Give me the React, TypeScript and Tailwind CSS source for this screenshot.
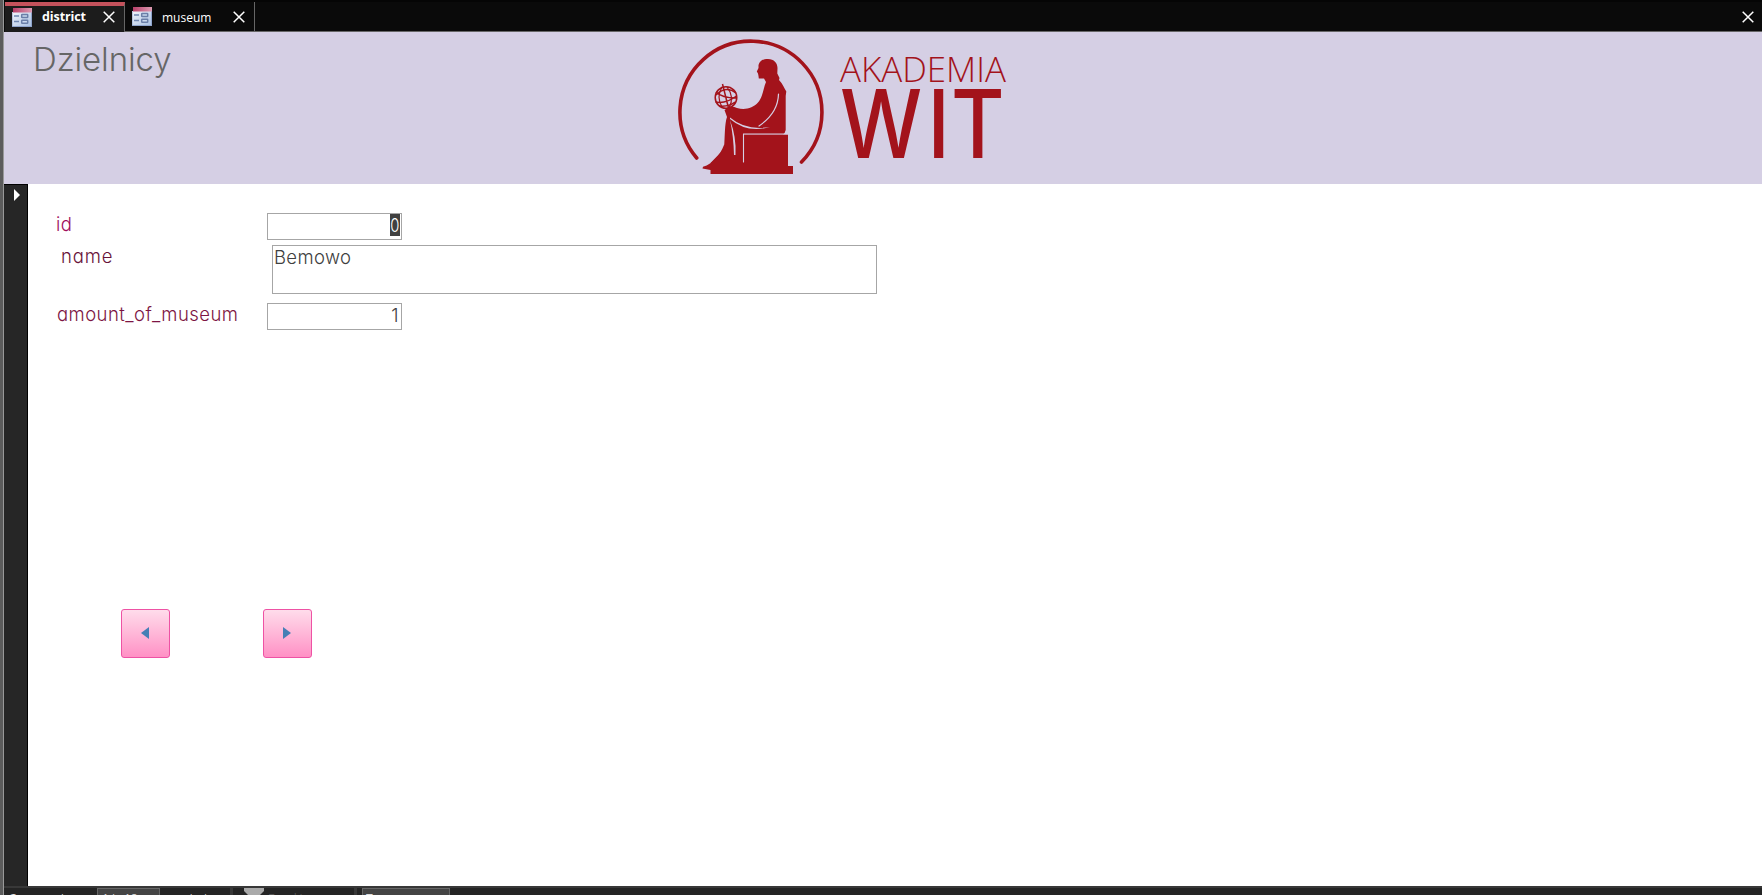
import React from "react";

const GOTHIC =
  "font-['Inter',sans-serif] font-light [font-feature-settings:'cv11'_1]";

function FormIcon() {
  return (
    <svg width="20" height="19" viewBox="0 0 20 19" className="shrink-0">
      <defs>
        <linearGradient id="iconHead" x1="0" y1="0" x2="1" y2="0">
          <stop offset="0" stopColor="#b9406a" />
          <stop offset="1" stopColor="#dc9bb2" />
        </linearGradient>
        <linearGradient id="iconBody" x1="0" y1="0" x2="1" y2="1">
          <stop offset="0" stopColor="#f2f6fc" />
          <stop offset="1" stopColor="#a9c0e2" />
        </linearGradient>
      </defs>
      <rect x="0" y="4" width="20" height="15" fill="#8ea3cb" />
      <rect x="0.5" y="4" width="18.5" height="14" fill="url(#iconBody)" />
      <rect x="1" y="0" width="19" height="4.5" fill="url(#iconHead)" />
      <path d="M2 8h5M2 13.5h5" stroke="#6f86b0" strokeWidth="1.6" />
      <rect x="9.7" y="6.6" width="6" height="3" rx="0.5" fill="#c9d8ee" stroke="#6a7fa8" strokeWidth="1.5" />
      <rect x="9.7" y="12.2" width="6" height="3" rx="0.5" fill="#c9d8ee" stroke="#6a7fa8" strokeWidth="1.5" />
    </svg>
  );
}

function CloseIcon() {
  return (
    <svg width="12" height="12" viewBox="0 0 12 12" className="shrink-0">
      <path d="M0.7 0.7l10.6 10.6M11.3 0.7L0.7 11.3" stroke="#fff" strokeWidth="1.5" />
    </svg>
  );
}

function TabBar() {
  return (
    <div className="flex h-8 border-t-2 border-[#050505] bg-[#0a0a0a] font-['Open_Sans',sans-serif] text-xs text-white">
      <div className="ml-px flex w-[120px] items-center border-t-4 border-r border-t-[#c4525c] border-r-[#666] bg-[#1c1c1c] pl-[7px]">
        <div className="-mt-1 flex items-center">
          <FormIcon />
          <span className="ml-2.5 w-[61px] text-[12.5px] font-bold tracking-[-0.1px]">district</span>
          <CloseIcon />
        </div>
      </div>
      <div className="flex w-[130px] items-center border-r border-b border-[#666] pl-[7px]">
        <FormIcon />
        <span className="ml-2.5 mt-0.5 w-[71px]">museum</span>
        <CloseIcon />
      </div>
      <div className="flex flex-1 items-center justify-end border-b border-[#666] pr-2">
        <CloseIcon />
      </div>
    </div>
  );
}

function Logo() {
  return (
    <svg width="340" height="152" viewBox="670 32 340 152" className="block">
      <g fill="none" stroke="#a3131b">
        <path d="M696.7 158A71 71 0 1 1 801.5 162" strokeWidth="3.6" strokeLinecap="round" />
        <g strokeWidth="1.5">
          <circle cx="726" cy="97.5" r="10.8" />
          <path d="M722.5 84L729.5 112M716 95Q726 85 736 93M715.5 102Q726 104 736.5 96M719 106Q729 107 735 102M716 92Q722 98 736 98" />
          <path d="M722 87Q716 97 722 107M727 87Q735 97 729 108" strokeWidth="1.2" />
        </g>
      </g>
      <g fill="#a3131b">
        <path d="M758.5 65C760 60.5 763 58.9 768 58.9C774 59 777.5 63 777.5 68L777.3 73.5L779.5 78L779 80C783 84 784 88 786.3 91.5L785.7 96V130Q785 133.5 783 134.5H743V163H710.5L724 149C725 136 724.5 124 727 117L724.5 110L729 107Q733 106 737 108C745 110.500 753 108 758 102.5C763 97 763 89 766 82L764 78.5H758.8L758.5 76L758 73.500L756.8 71.5L758.5 68Z" />
        <path d="M743 134.5H788V166H793V174H710.5V170L702.5 168.5L703 166.8C713 164 720 155 724 145Z" />
      </g>
      <g fill="none" stroke="#d5cfe4" strokeLinecap="round">
        <path d="M743.5 162V134H788" strokeWidth="1.1" />
        <path d="M778.5 94Q778 113 759 126" strokeWidth="1.2" />
      </g>
      <g fill="#d5cfe4">
        <path d="M730 117.5Q746 131 770 127Q747 133.5 730 119Z" />
        <path d="M730 120Q736.5 137 735.5 155H734Q733.5 136 730 120Z" />
      </g>
      <g fill="#a3131b">
        <text
          transform="translate(840 81.5) scale(1 1.15)"
          textLength="166"
          lengthAdjust="spacingAndGlyphs"
          className="font-['Open_Sans',sans-serif] text-[31px] font-light"
        >
          AKADEMIA
        </text>
        <text
          transform="translate(0 158) scale(1 1.15)"
          x="840 927.5 951"
          className="font-['Inter',sans-serif] text-[82px] font-medium"
        >
          WIT
        </text>
      </g>
    </svg>
  );
}

function NavButton({ label, d }: { label: string; d: string }) {
  return (
    <button
      aria-label={label}
      className="flex h-[49px] w-[49px] items-center justify-center rounded-[3px] border border-[#ee52a4] bg-linear-to-b from-[#ffdceb] to-[#ff90c5]"
    >
      <svg width="8" height="12" viewBox="0 0 8 12" className="-ml-px -mt-px">
        <path d={d} fill="#467fb5" />
      </svg>
    </button>
  );
}

function RecordBar() {
  return (
    <div className="flex h-[9px] shrink-0 overflow-hidden border-t-2 border-[#383838] bg-[#242424] font-['Open_Sans',sans-serif] text-xs leading-4 text-[#ddd]">
      <span className="ml-1.5 mt-[3px] w-[51px] shrink-0">Запис:</span>
      <span className="mt-0.5 w-9 shrink-0 whitespace-pre text-[10px]">I◂  ◂</span>
      <div className="h-6 w-[63px] shrink-0 border border-[#666] bg-[#444] pl-1 pt-0.5">1 із 18</div>
      <span className="mt-0.5 w-[70px] shrink-0 whitespace-pre pl-3 text-[10px]">▸   ▸I  ▸*</span>
      <div className="h-6 w-[3px] shrink-0 bg-[#383838]" />
      <svg width="20" height="7" viewBox="0 0 20 7" className="ml-[11px] shrink-0">
        <path d="M0 0H20V3L16 7H4L0 3Z" fill="#aaa" />
      </svg>
      <span className="mt-[3px] w-[90px] shrink-0 pl-1 text-[#555]">Без фільтра</span>
      <div className="w-[3px] shrink-0 bg-[#383838]" />
      <div className="ml-[5px] h-6 w-[88px] shrink-0 border border-[#666] bg-[#444] pl-0.5 pt-0.5">Пошук</div>
    </div>
  );
}

const field = "border border-[#a6a6a6] bg-white text-[#404040]";

export default function App() {
  return (
    <div className="flex h-[895px] w-[1762px] overflow-hidden bg-white">
      <div className="w-1 shrink-0 border-r border-[#999] bg-[#5c5c5c]" />
      <div className="flex min-w-0 flex-1 flex-col">
        <TabBar />
        <header className={`flex h-[152px] shrink-0 bg-[#d5cfe4] ${GOTHIC}`}>
          <h1 className="w-[666px] pl-[29px] pt-[7px] text-[33px] leading-[40px] tracking-[-0.1px] text-[#666]">
            Dzielnicy
          </h1>
          <Logo />
        </header>
        <div className="flex min-h-0 flex-1">
          <div className="w-6 shrink-0 border-t border-r border-black bg-[#262626] pl-2.5 pt-1">
            <svg width="6" height="12" viewBox="0 0 6 12">
              <path d="M0 0L6 6L0 12Z" fill="#fff" />
            </svg>
          </div>
          <main className={`flex-1 pt-[29px] text-[18.5px] leading-[22px] tracking-[0.35px] text-[#7d1543] ${GOTHIC}`}>
            <div className="flex h-8">
              <label className="w-[239px] pl-[28px] text-[#a00d5c]">id</label>
              <div className={`flex h-[27px] w-[135px] justify-end pr-px ${field}`}>
                <span className="flex h-[22px] w-2.5 items-center justify-center bg-[#404040] text-white">
                  <span className="scale-x-[0.8]">0</span>
                </span>
              </div>
            </div>
            <div className="flex h-[58px]">
              <label className="w-[244px] pl-[33px] tracking-[0.9px] text-[#681239]">name</label>
              <div className={`h-[49px] w-[605px] pl-px ${field}`}>Bemowo</div>
            </div>
            <div className="flex">
              <label className="w-[239px] pl-[29px] tracking-[0.45px]">amount_of_museum</label>
              <div className={`h-[27px] w-[135px] pr-0.5 text-right ${field}`}>1</div>
            </div>
            <div className="flex gap-[93px] pl-[93px] pt-[279px]">
              <NavButton label="Previous record" d="M8 0V12L0 6Z" />
              <NavButton label="Next record" d="M0 0V12L8 6Z" />
            </div>
          </main>
        </div>
        <RecordBar />
      </div>
    </div>
  );
}
